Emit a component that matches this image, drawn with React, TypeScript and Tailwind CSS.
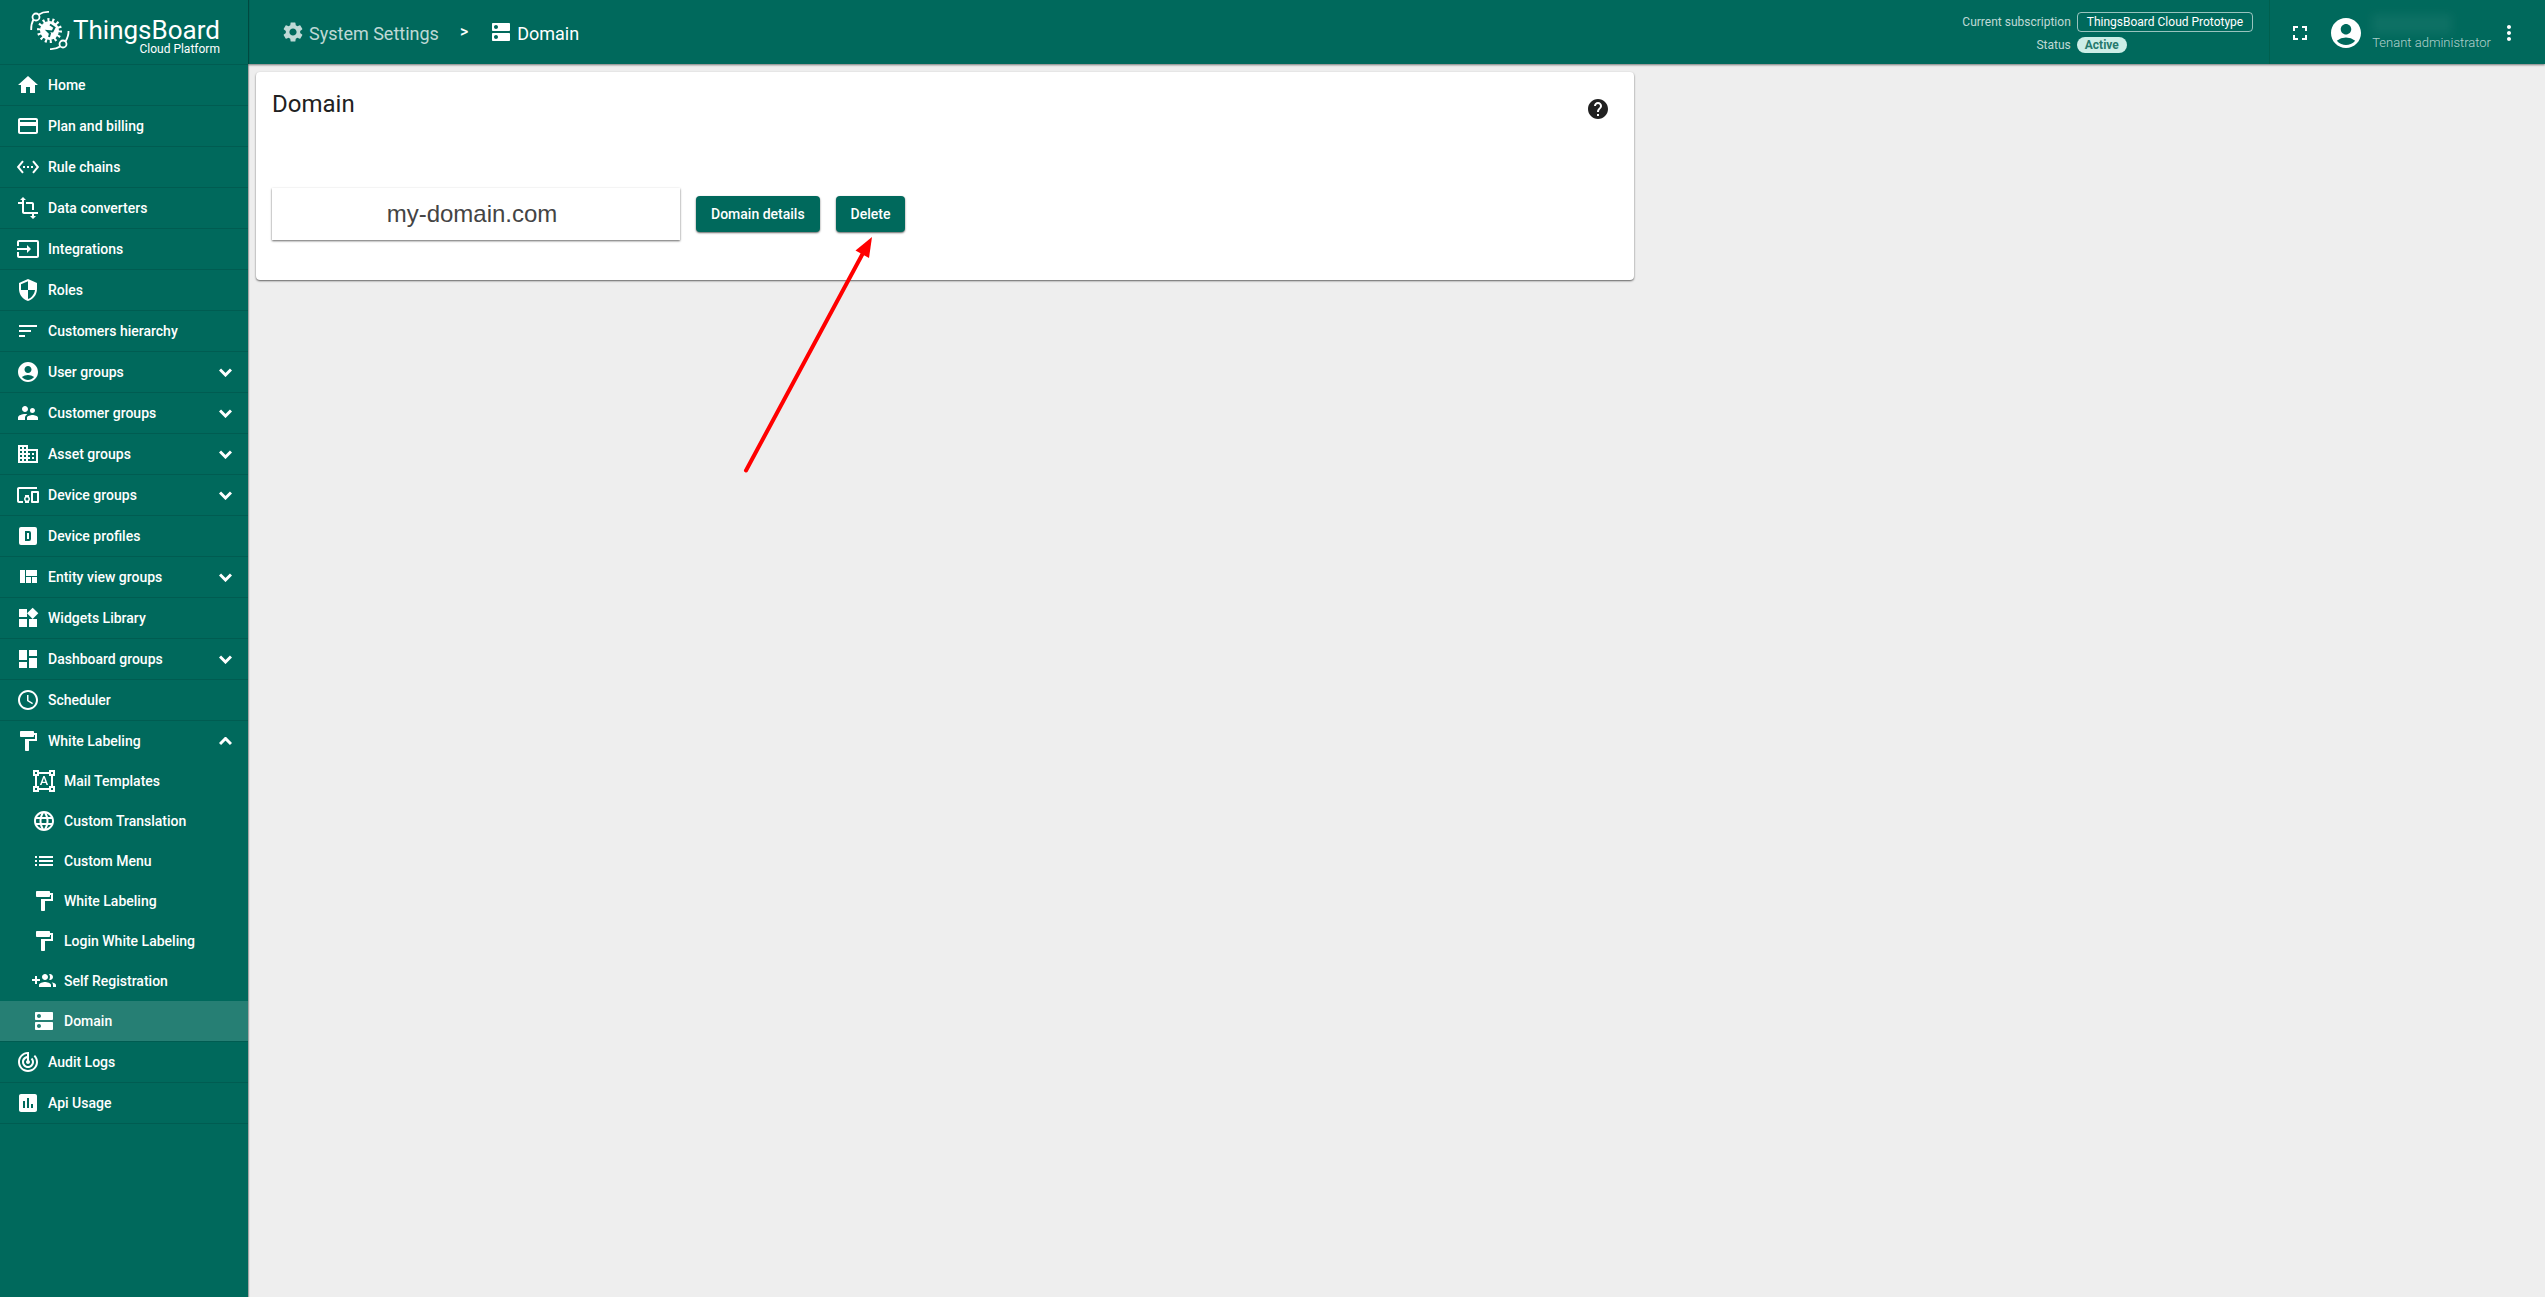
import type { ReactNode } from "react";
import type { IconType } from "react-icons";
import {
  MdAccountCircle,
  MdDashboard,
  MdDevicesOther,
  MdDns,
  MdDomain,
  MdFormatPaint,
  MdFormatShapes,
  MdFullscreen,
  MdHelp,
  MdHome,
  MdInput,
  MdInsertChart,
  MdLanguage,
  MdList,
  MdMoreVert,
  MdPayment,
  MdSchedule,
  MdSecurity,
  MdSettings,
  MdSettingsEthernet,
  MdSort,
  MdSupervisorAccount,
  MdTrackChanges,
  MdTransform,
  MdWidgets,
} from "react-icons/md";
import { clsx } from "clsx";

type Icon = IconType | ((props: { size?: number }) => ReactNode);

type MenuItem = {
  label: string;
  icon: Icon;
  toggle?: boolean;
  active?: boolean;
  children?: MenuItem[];
};

const ViewQuilt = ({ size = 24 }: { size?: number }) => (
  <svg width={size} height={size} viewBox="0 0 24 24" fill="currentColor">
    <path d="M10 18h5v-6h-5v6zm-6 0h5V5H4v13zm12 0h5v-6h-5v6zM10 5v6h11V5H10z" />
  </svg>
);

const AlphaDBox = ({ size = 24 }: { size?: number }) => (
  <svg width={size} height={size} viewBox="0 0 24 24" fill="currentColor">
    <path d="M9 7v10h4a2 2 0 0 0 2-2V9a2 2 0 0 0-2-2H9m2 2h2v6h-2V9M5 3h14a2 2 0 0 1 2 2v14a2 2 0 0 1-2 2H5a2 2 0 0 1-2-2V5a2 2 0 0 1 2-2z" fillRule="evenodd" />
  </svg>
);

const GroupAdd = ({ size = 24 }: { size?: number }) => (
  <svg width={size} height={size} viewBox="0 0 24 24" fill="currentColor">
    <path d="M8 10H5V7H3v3H0v2h3v3h2v-3h3v-2zm10 1c1.66 0 2.99-1.34 2.99-3S19.66 5 18 5c-.32 0-.63.05-.91.14.57.81.9 1.79.9 2.86s-.34 2.04-.9 2.86c.28.09.59.14.91.14zm-5 0c1.66 0 2.99-1.34 2.99-3S14.66 5 13 5c-1.66 0-3 1.34-3 3s1.34 3 3 3zm6.62 2.16c.83.73 1.38 1.66 1.38 2.84v2h3v-2c0-1.54-2.37-2.49-4.38-2.84zM13 13c-2 0-6 1-6 3v2h12v-2c0-2-4-3-6-3z" />
  </svg>
);

const menu: MenuItem[] = [
  { label: "Home", icon: MdHome },
  { label: "Plan and billing", icon: MdPayment },
  { label: "Rule chains", icon: MdSettingsEthernet },
  { label: "Data converters", icon: MdTransform },
  { label: "Integrations", icon: MdInput },
  { label: "Roles", icon: MdSecurity },
  { label: "Customers hierarchy", icon: MdSort },
  { label: "User groups", icon: MdAccountCircle, toggle: true },
  { label: "Customer groups", icon: MdSupervisorAccount, toggle: true },
  { label: "Asset groups", icon: MdDomain, toggle: true },
  { label: "Device groups", icon: MdDevicesOther, toggle: true },
  { label: "Device profiles", icon: AlphaDBox },
  { label: "Entity view groups", icon: ViewQuilt, toggle: true },
  { label: "Widgets Library", icon: MdWidgets },
  { label: "Dashboard groups", icon: MdDashboard, toggle: true },
  { label: "Scheduler", icon: MdSchedule },
  {
    label: "White Labeling",
    icon: MdFormatPaint,
    toggle: true,
    children: [
      { label: "Mail Templates", icon: MdFormatShapes },
      { label: "Custom Translation", icon: MdLanguage },
      { label: "Custom Menu", icon: MdList },
      { label: "White Labeling", icon: MdFormatPaint },
      { label: "Login White Labeling", icon: MdFormatPaint },
      { label: "Self Registration", icon: GroupAdd },
      { label: "Domain", icon: MdDns, active: true },
    ],
  },
  { label: "Audit Logs", icon: MdTrackChanges },
  { label: "Api Usage", icon: MdInsertChart },
];

const Chevron = ({ open }: { open: boolean }) => (
  <svg width="13" height="9" viewBox="0 0 13 9" fill="none" stroke="currentColor" strokeWidth="3">
    <path d={open ? "M1 7 6.5 1.5 12 7" : "M1 1.5 6.5 7 12 1.5"} />
  </svg>
);

const Logo = () => (
  <a href="#" className="flex h-16 items-center gap-px pl-7 text-white">
    <svg width="44" height="44" viewBox="28 10 44 44" fill="none" stroke="currentColor" strokeWidth="1.8">
      <circle cx="36" cy="17" r="3.5" />
      <path d="M39 14.5c3-2.2 6-2.8 10-2.6M33.5 19.5C31.5 23 31 26 31.2 30" />
      <circle cx="63" cy="44" r="3.5" />
      <path d="M60 46.5c-3 2.2-6 2.8-10 2.6M65.5 41.5c2-3.5 3.2-6.5 3-10.5" />
      {/* gear teeth */}
      <circle cx="49.5" cy="30.5" r="10.5" strokeWidth="4" strokeDasharray="2 2.712" />
      <circle cx="49.5" cy="30.5" r="9.5" fill="currentColor" stroke="none" />
      <path d="M50 24.5l4.500 3-2 4-5-.5 2.500 2.500-1 3.500" stroke="#00695c" strokeWidth="2" />
    </svg>
    <span className="flex flex-col items-end pt-2">
      <span className="text-[26px] leading-[26px]">ThingsBoard</span>
      <span className="text-xs leading-3">Cloud Platform</span>
    </span>
  </a>
);

const MenuLink = ({ item, nested }: { item: MenuItem; nested?: boolean }) => (
  <a
    href="#"
    className={clsx(
      "flex h-10 items-center gap-2 pr-4 text-sm font-medium",
      nested ? "pl-8" : "pl-4",
      item.active && "bg-[#267f74]"
    )}
  >
    <item.icon size={24} />
    <span className="flex-1">{item.label}</span>
    {item.toggle && <Chevron open={!!item.children} />}
  </a>
);

const Sidebar = () => (
  <aside className="z-10 w-62 shrink-0 bg-[#00695c] text-white shadow-[1px_0_1px_rgba(0,0,0,0.3)]">
    <Logo />
    <nav>
      <ul className="border-y border-[#005c51]">
        {menu.map((item) => (
          <li key={item.label} className="border-b border-[#005c51] last:border-b-0">
            <MenuLink item={item} />
            {item.children && (
              <ul>
                {item.children.map((child) => (
                  <li key={child.label}>
                    <MenuLink item={child} nested />
                  </li>
                ))}
              </ul>
            )}
          </li>
        ))}
      </ul>
    </nav>
  </aside>
);

const Header = () => (
  <header className="flex h-16 items-center bg-[#00695c] pr-4 pl-[33px] text-white shadow-[0_1px_2px_rgba(0,0,0,0.5)]">
    <nav className="flex flex-1 items-center text-lg">
      <a href="#" className="flex items-center gap-1 text-white/75">
        <MdSettings size={24} />
        <span className="pt-1">System Settings</span>
      </a>
      <span className="px-[21px] text-base font-medium">&gt;</span>
      <span className="flex items-center gap-1">
        <MdDns size={24} />
        <span className="pt-1">Domain</span>
      </span>
    </nav>
    <dl className="grid grid-cols-[auto_auto] items-center gap-x-1.5 gap-y-[5px] pt-px pr-4 text-xs">
      <dt className="text-right text-white/75">Current subscription</dt>
      <dd className="rounded border border-white/60 px-[9px] leading-[18px]">ThingsBoard Cloud Prototype</dd>
      <dt className="text-right text-white/75">Status</dt>
      <dd className="justify-self-start rounded-lg bg-[#cceee7] px-2 leading-4 font-bold text-[#26796d]">Active</dd>
    </dl>
    <div className="flex h-16 items-center border-l border-[#00604f] pt-0.5 pl-3.5">
      <button type="button" aria-label="Fullscreen" className="p-1">
        <MdFullscreen size={24} />
      </button>
      <button type="button" className="flex items-center gap-2 pl-3 text-left">
        <MdAccountCircle size={36} />
        <span className="flex flex-col">
          <span className="h-5 w-20 bg-white/5 blur-xs" />
          <span className="text-[13px] leading-[18px] font-light text-white/70">Tenant administrator</span>
        </span>
      </button>
      <button type="button" aria-label="More" className="pr-2 pl-1.5">
        <MdMoreVert size={24} />
      </button>
    </div>
  </header>
);

// Points at the Delete button
const Arrow = () => (
  <svg className="pointer-events-none absolute top-[156px] left-[487px]" width="150" height="260" viewBox="735 220 150 260">
    <path d="M746 470.5 862.5 254" stroke="#f00" strokeWidth="4" strokeLinecap="round" />
    <path d="M872 237l-16.5 13.5 13.5 7.5z" fill="#f00" />
  </svg>
);

const raised = "shadow-[0_1px_2px_rgba(0,0,0,0.6)]";

const DomainCard = () => (
  <section className={clsx("m-2 w-3/5 rounded bg-white px-4 pt-4 pb-10", raised)}>
    <div className="flex items-start justify-between">
      <h1 className="text-2xl leading-8">Domain</h1>
      <button type="button" aria-label="Help" className="px-2 pt-[9px]">
        <MdHelp size={24} />
      </button>
    </div>
    <form className="flex items-center gap-4 pt-[67px]">
      <input
        aria-label="Domain name"
        defaultValue="my-domain.com"
        className={clsx("h-[52px] w-[408px] pr-2 text-center font-['Liberation_Sans',sans-serif] text-2xl text-[#444]", raised)}
      />
      <button type="button" className={clsx("h-9 rounded bg-[#00695c] px-[15px] text-sm font-medium text-white", raised)}>
        Domain details
      </button>
      <button type="button" className={clsx("h-9 rounded bg-[#00695c] px-[15px] text-sm font-medium text-white", raised)}>
        Delete
      </button>
    </form>
  </section>
);

const App = () => (
  <div className="flex min-h-screen bg-[#eee] font-[Roboto,sans-serif] text-[#212121]">
    <Sidebar />
    <div className="flex-1">
      <Header />
      <main className="relative flow-root">
        <DomainCard />
        <Arrow />
      </main>
    </div>
  </div>
);

export default App;
